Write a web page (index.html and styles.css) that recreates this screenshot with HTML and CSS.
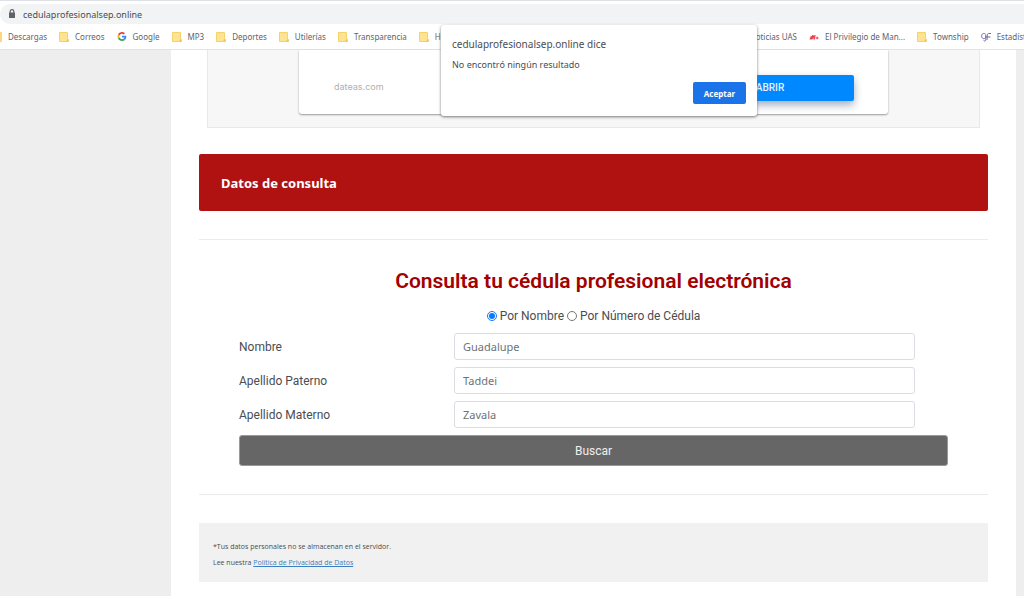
FILE: index.html
```
<!DOCTYPE html>
<html lang="es">
<head>
<meta charset="utf-8">
<title>Consulta tu cédula profesional electrónica</title>
<link rel="stylesheet" href="styles.css">
</head>
<body>
<svg class="symbols" aria-hidden="true">
  <symbol id="folder" viewBox="0 0 10 12"><path fill="#ffe391" stroke="#f4d36f" d="M.5 1.500h8v7h1v2h-9z"/><path fill="#f2c94f" d="M8 8.500h1.500v2H7z"/></symbol>
</svg>
<header class="browser">
  <div class="tabs-edge"></div>
  <div class="address">
    <svg class="lock" viewBox="0 0 8 10"><path fill="none" stroke="#5f6368" stroke-width="1.200" d="M2.200 4V2.400a1.800 1.800 0 0 1 3.600 0V4"/><rect x="1" y="3.500" width="6" height="5.500" rx=".5" fill="#5f6368"/></svg>
    <span>cedulaprofesionalsep.online</span>
  </div>
  <nav class="bookmarks" aria-label="Marcadores">
    <div class="group">
      <a href="#">Descargas</a>
      <a href="#"><svg class="icon"><use href="#folder"/></svg>Correos</a>
      <a href="#"><svg class="icon google" viewBox="0 0 48 48"><path fill="#ea4335" d="M24 9.500c3.500 0 6.700 1.200 9.200 3.600l6.900-6.900C35.900 2.400 30.500 0 24 0 14.600 0 6.500 5.400 2.600 13.200l8 6.200C12.400 13.700 17.700 9.500 24 9.500z"/><path fill="#4285f4" d="M47 24.500c0-1.600-.2-3.100-.4-4.500H24v9h12.900c-.6 3-2.300 5.500-4.800 7.200l7.700 6C44.400 38 47 31.800 47 24.500z"/><path fill="#fbbc05" d="M10.500 28.600a14.500 14.500 0 0 1 0-9.200l-8-6.200a24 24 0 0 0 0 21.600z"/><path fill="#34a853" d="M24 48c6.500 0 11.900-2.100 15.900-5.800l-7.700-6c-2.200 1.400-4.900 2.300-8.200 2.300-6.300 0-11.600-4.200-13.500-9.900l-8 6.200C6.500 42.600 14.600 48 24 48z"/></svg>Google</a>
      <a href="#"><svg class="icon"><use href="#folder"/></svg>MP3</a>
      <a href="#"><svg class="icon"><use href="#folder"/></svg>Deportes</a>
      <a href="#"><svg class="icon"><use href="#folder"/></svg>Utilerías</a>
      <a href="#"><svg class="icon"><use href="#folder"/></svg>Transparencia</a>
      <a href="#"><svg class="icon"><use href="#folder"/></svg>Ho</a>
    </div>
    <div class="group">
      <a href="#">Noticias UAS</a>
      <a href="#"><svg class="icon" viewBox="0 0 10 12"><path fill="#f04450" d="M.5 8.500 1.500 5.500 3 4.800 3.300 4h1.400l-.3 1.200L5.800 4h.8L5.900 8.500H4.500l.2-1.500-1.500 1.500z"/><path fill="none" stroke="#f04450" stroke-width="1.200" d="M6.800 7h2.700M8.200 5.800v2.400"/></svg>El Privilegio de Man...</a>
      <a href="#"><svg class="icon"><use href="#folder"/></svg>Township</a>
      <a href="#"><svg class="icon" viewBox="0 0 10 12"><path fill="none" stroke="#7468a6" d="M4.500 3C2 1.500 0 3.500.8 6s3.400 2 4-.2V3.500M4.800 5v3.500c0 2-2 2-2 .8M10 2.500H7.500C6 2.500 6.500 5 6 9M5 6h4.500"/></svg>Estadíst</a>
    </div>
  </nav>
</header>

<main class="page">
  <aside class="ad">
    <div class="ad-card">
      <span>dateas.com</span>
      <button class="open" type="button">ABRIR</button>
    </div>
  </aside>
  <h2 class="banner">Datos de consulta</h2>
  <section class="search">
    <h1>Consulta tu cédula profesional electrónica</h1>
    <form>
      <div class="modes">
        <input type="radio" name="modo" id="por-nombre" checked><label for="por-nombre">Por Nombre</label>
        <input type="radio" name="modo" id="por-numero"><label for="por-numero">Por Número de Cédula</label>
      </div>
      <div class="field"><label for="nombre">Nombre</label><input type="text" id="nombre" value="Guadalupe"></div>
      <div class="field"><label for="paterno">Apellido Paterno</label><input type="text" id="paterno" value="Taddei"></div>
      <div class="field"><label for="materno">Apellido Materno</label><input type="text" id="materno" value="Zavala"></div>
      <button class="submit" type="button">Buscar</button>
    </form>
  </section>
  <footer class="notice">
    <p>*Tus datos personales no se almacenan en el servidor.</p>
    <p>Lee nuestra <a href="#">Política de Privacidad de Datos</a></p>
  </footer>
</main>

<div class="dialog" role="alertdialog" aria-labelledby="dialog-title" aria-describedby="dialog-text">
  <h2 id="dialog-title">cedulaprofesionalsep.online dice</h2>
  <p id="dialog-text">No encontró ningún resultado</p>
  <button type="button">Aceptar</button>
</div>
</body>
</html>
```
FILE: styles.css
```
* { box-sizing: border-box; }
html { background: #eee; }
body {
  display: flex;
  flex-direction: column;
  min-height: 100vh;
  margin: 0;
  overflow: hidden;
  color: #4a4d50;
  font-family: "Noto Sans", sans-serif;
}
h1, h2, p { margin: 0; }
button, input { font-family: inherit; }
.symbols { display: none; }

.browser { background: #fff; border-bottom: 1px solid #e2e3e4; }
.tabs-edge { height: 4px; border-top: 1px solid #dee1e6; }
.address {
  display: flex;
  align-items: center;
  gap: 7px;
  height: 20px;
  padding-left: 8px;
  background: #f1f3f4;
  border-radius: 10px 0 0 10px;
  font-size: 9px;
}
.lock { width: 8px; height: 10px; }
.bookmarks {
  display: flex;
  justify-content: space-between;
  height: 25px;
  margin-right: -2px;
  padding-left: 8px;
  font-size: 8px;
}
.group { display: flex; gap: 12px; }
.bookmarks a {
  display: flex;
  align-items: center;
  gap: 6px;
  color: #5f6368;
  text-decoration: none;
  white-space: nowrap;
}
.group:first-child a:first-child::before {
  content: "";
  width: 2px;
  height: 10px;
  margin-left: -8px;
  background: #fbd978;
}
.icon { width: 10px; height: 12px; }
.google { height: 9px; }

.page {
  flex: 1;
  margin: 0 8px 0 171px;
  padding: 0 28px;
  background: #fff;
}
.ad {
  height: 78px;
  margin: 0 8px;
  padding: 0 91px;
  background: #f7f7f7;
  border: 1px solid #e8e8e8;
  border-top: 0;
}
.ad-card {
  display: flex;
  justify-content: space-between;
  align-items: flex-start;
  height: 64px;
  padding: 25px 34px 0 35px;
  background: #fff;
  border-radius: 0 0 3px 3px;
  box-shadow: 0 1px 2px #999;
  color: #b0b0b0;
  font: 9px/24px Inter, sans-serif;
}
.open {
  width: 168px;
  height: 26px;
  padding: 0 0 2px;
  border: 0;
  border-radius: 2px;
  background: #0088ff;
  box-shadow: 0 4px 8px #a5acc0;
  color: #e3f2ff;
  font: 500 10px Roboto, sans-serif;
}
.banner {
  margin: 26px 0 28px;
  padding: 21px 22px 19px;
  background: #b01212;
  border-radius: 2px;
  color: #fff;
  font-size: 13px;
  line-height: 17px;
}
.search {
  padding: 27px 40px 28px;
  border-top: 1px solid #ebebeb;
  border-bottom: 1px solid #ebebeb;
  font-family: Roboto, sans-serif;
  font-size: 12px;
}
.search h1 {
  color: #a30000;
  font-size: 21px;
  font-weight: 600;
  line-height: 28px;
  text-align: center;
}
.modes {
  display: flex;
  justify-content: center;
  align-items: center;
  gap: 3px;
  height: 20px;
  margin: 11px 0 7px;
}
.modes input { width: 10px; height: 10px; margin: 0; accent-color: #0a78ff; }
.field {
  display: grid;
  grid-template-columns: 215px 1fr;
  align-items: center;
  margin: 0 33px 7px 0;
}
.field input {
  width: 100%;
  height: 27px;
  padding: 0 8px;
  border: 1px solid #dadee2;
  border-radius: 3px;
  background: #fff;
  color: #6c737a;
  font: 11px "Noto Sans", sans-serif;
}
.submit {
  display: block;
  width: 100%;
  height: 31px;
  border: 1px solid #999;
  border-radius: 3px;
  background: #666;
  color: #eee;
  font-size: 12px;
}
.notice {
  margin-top: 28px;
  padding: 16px 14px 11px;
  background: #f1f1f1;
  font: 7px/16px "Open Sans", sans-serif;
}
.notice a { color: #3c7fc0; }

.dialog {
  position: absolute;
  top: 25px;
  left: 50%;
  display: flex;
  flex-direction: column;
  width: 316px;
  margin-left: -71px;
  padding: 12px 11px;
  background: #fff;
  border-radius: 3px;
  box-shadow: 0 1px 3px #777;
}
.dialog h2 { font-size: 10px; font-weight: 400; line-height: 15px; }
.dialog p { margin: 6px 0 10px; font-size: 9px; line-height: 14px; }
.dialog button {
  align-self: flex-end;
  width: 53px;
  height: 22px;
  border: 0;
  border-radius: 2px;
  background: #1a73e8;
  color: #fff;
  font-size: 8px;
  font-weight: 700;
}
```
